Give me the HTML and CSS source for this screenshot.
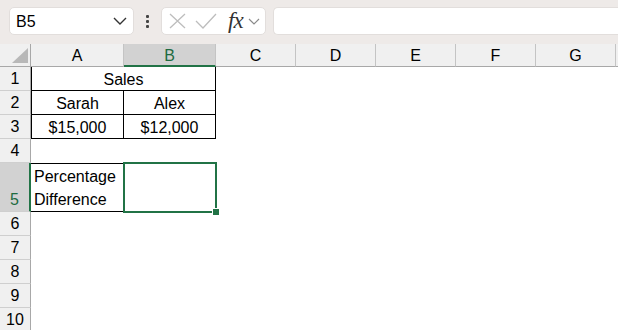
FILE: index.html
```html
<!DOCTYPE html>
<html lang="en">

<head>
    <meta charset="UTF-8">
    <title>Percentage Difference</title>
    <link rel="stylesheet" href="styles.css">
</head>

<body>
    <div class="toolbar">
        <div class="namebox">
            <span>B5</span>
            <svg class="chev" width="14" height="8" viewBox="0 0 14 8">
                <polyline points="1,1 7,7 13,1" fill="none" stroke="#333" stroke-width="1.4" />
            </svg>
        </div>
        <div class="dots">
            <i></i><i></i><i></i>
        </div>
        <div class="fxbox">
            <svg width="18" height="16" viewBox="0 0 18 16">
                <path d="M1 1 L16 15 M16 1 L1 15" stroke="#bdbdbd" stroke-width="1.3" fill="none" />
            </svg>
            <svg width="22" height="16" viewBox="0 0 22 16">
                <polyline points="1,8 8,15 21,1" fill="none" stroke="#bdbdbd" stroke-width="1.3" />
            </svg>
            <span class="fx">fx</span>
            <svg width="12" height="7" viewBox="0 0 12 7">
                <polyline points="1,1 6,6 11,1" fill="none" stroke="#8a8a8a" stroke-width="1.2" />
            </svg>
        </div>
        <div class="formula"></div>
    </div>

    <div class="sheet">
        <div class="ch corner"><div class="tri"></div></div>
        <div class="ch">A</div>
        <div class="ch sel">B</div>
        <div class="ch">C</div>
        <div class="ch">D</div>
        <div class="ch">E</div>
        <div class="ch">F</div>
        <div class="ch">G</div>
        <div class="ch last"></div>

        <div class="rh">1</div>
        <div class="cell box left merged">Sales</div>

        <div class="rh">2</div>
        <div class="cell box left">Sarah</div>
        <div class="cell box">Alex</div>

        <div class="rh">3</div>
        <div class="cell box left">$15,000</div>
        <div class="cell box">$12,000</div>

        <div class="rh">4</div>

        <div class="rh rsel">5</div>
        <div class="cell box left top wrap">Percentage<br>Difference</div>
        <div class="cell active">
            <div class="selbox"></div>
            <div class="handle"></div>
        </div>

        <div class="rh">6</div>
        <div class="rh">7</div>
        <div class="rh">8</div>
        <div class="rh">9</div>
        <div class="rh">10</div>
    </div>
</body>

</html>
```

FILE: styles.css
```css
* {
    margin: 0;
    padding: 0;
    box-sizing: border-box;
}

body {
    width: 618px;
    height: 330px;
    overflow: hidden;
    background-color: #fff;
    font-family: "Liberation Sans", Arial, sans-serif;
    font-size: 16px;
    color: #000;
}

/* formula bar */
.toolbar {
    height: 44px;
    background-color: #eeeae8;
    display: flex;
    align-items: flex-start;
    padding: 7px 0 0 9px;
}

.namebox {
    width: 125px;
    height: 28px;
    background-color: #fff;
    border: 1px solid #e2dedc;
    border-radius: 5px;
    display: flex;
    align-items: center;
    justify-content: space-between;
    padding: 0 6px 0 6px;
}

.namebox span {
    padding-top: 1px;
}

.dots {
    width: 27px;
    height: 28px;
    display: flex;
    flex-direction: column;
    align-items: center;
    justify-content: center;
    gap: 2px;
}

.dots i {
    width: 3px;
    height: 3px;
    background-color: #444;
    border-radius: 1px;
}

.fxbox {
    width: 105px;
    height: 28px;
    background-color: #fff;
    border: 1px solid #e2dedc;
    border-radius: 5px;
    display: flex;
    align-items: center;
    gap: 8px;
    padding-left: 7px;
}

.fx {
    font-family: "Liberation Serif", "Times New Roman", serif;
    font-style: italic;
    font-size: 23px;
    color: #333;
    margin-left: 3px;
    margin-right: -3px;
    letter-spacing: -1px;
    line-height: 26px;
}

.formula {
    flex: 1;
    height: 28px;
    margin-left: 7px;
    background-color: #fff;
    border: 1px solid #e2dedc;
    border-right: none;
    border-radius: 5px 0 0 5px;
}

/* sheet grid */
.sheet {
    display: grid;
    grid-template-columns: 31px 93px 92px 80px 80px 80px 80px 80px 1fr;
    grid-template-rows: 23px repeat(4, 24px) 49px repeat(5, 24px);
}

.ch {
    background-color: #f0f0f0;
    border-right: 1px solid #c4c4c4;
    border-bottom: 1px solid #a8a8a8;
    display: flex;
    align-items: center;
    justify-content: center;
    padding-top: 2px;
}

.ch.sel {
    background-color: #d2d2d2;
    color: #1e6b41;
    border-bottom: 2px solid #217346;
    padding-top: 3px;
}

.ch.last {
    border-right: none;
}

.corner {
    border-right: 1px solid #a8a8a8;
    position: relative;
}

.tri {
    position: absolute;
    left: 12px;
    top: 4px;
    width: 16px;
    height: 15px;
    background-color: #b8b8b8;
    clip-path: polygon(100% 0, 100% 100%, 0 100%);
}

.rh {
    grid-column: 1;
    background-color: #f0f0f0;
    border-right: 1px solid #a8a8a8;
    border-bottom: 1px solid #cfcfcf;
    display: flex;
    align-items: flex-end;
    justify-content: center;
    padding-bottom: 2px;
    line-height: 18px;
}

.rh.rsel {
    background-color: #d2d2d2;
    color: #1e6b41;
    border-right: 2px solid #217346;
}

.cell {
    display: flex;
    align-items: flex-end;
    justify-content: center;
    line-height: 18px;
    padding-bottom: 1px;
}

.box {
    border-right: 1px solid #000;
    border-bottom: 1px solid #000;
}

.left {
    border-left: 1px solid #000;
}

.top {
    border-top: 1px solid #000;
}

.merged {
    grid-column: span 2;
}

.wrap {
    flex-direction: column;
    align-items: flex-start;
    justify-content: flex-end;
    padding-left: 3px;
    padding-bottom: 0;
    line-height: 23px;
    border-left: none;
}

.active {
    position: relative;
}

.selbox {
    position: absolute;
    left: -1px;
    top: -1px;
    right: -1px;
    bottom: -1px;
    border: 2px solid #217346;
}

.handle {
    position: absolute;
    right: -3px;
    bottom: -3px;
    width: 6px;
    height: 6px;
    background-color: #217346;
    outline: 1px solid #fff;
}
```
